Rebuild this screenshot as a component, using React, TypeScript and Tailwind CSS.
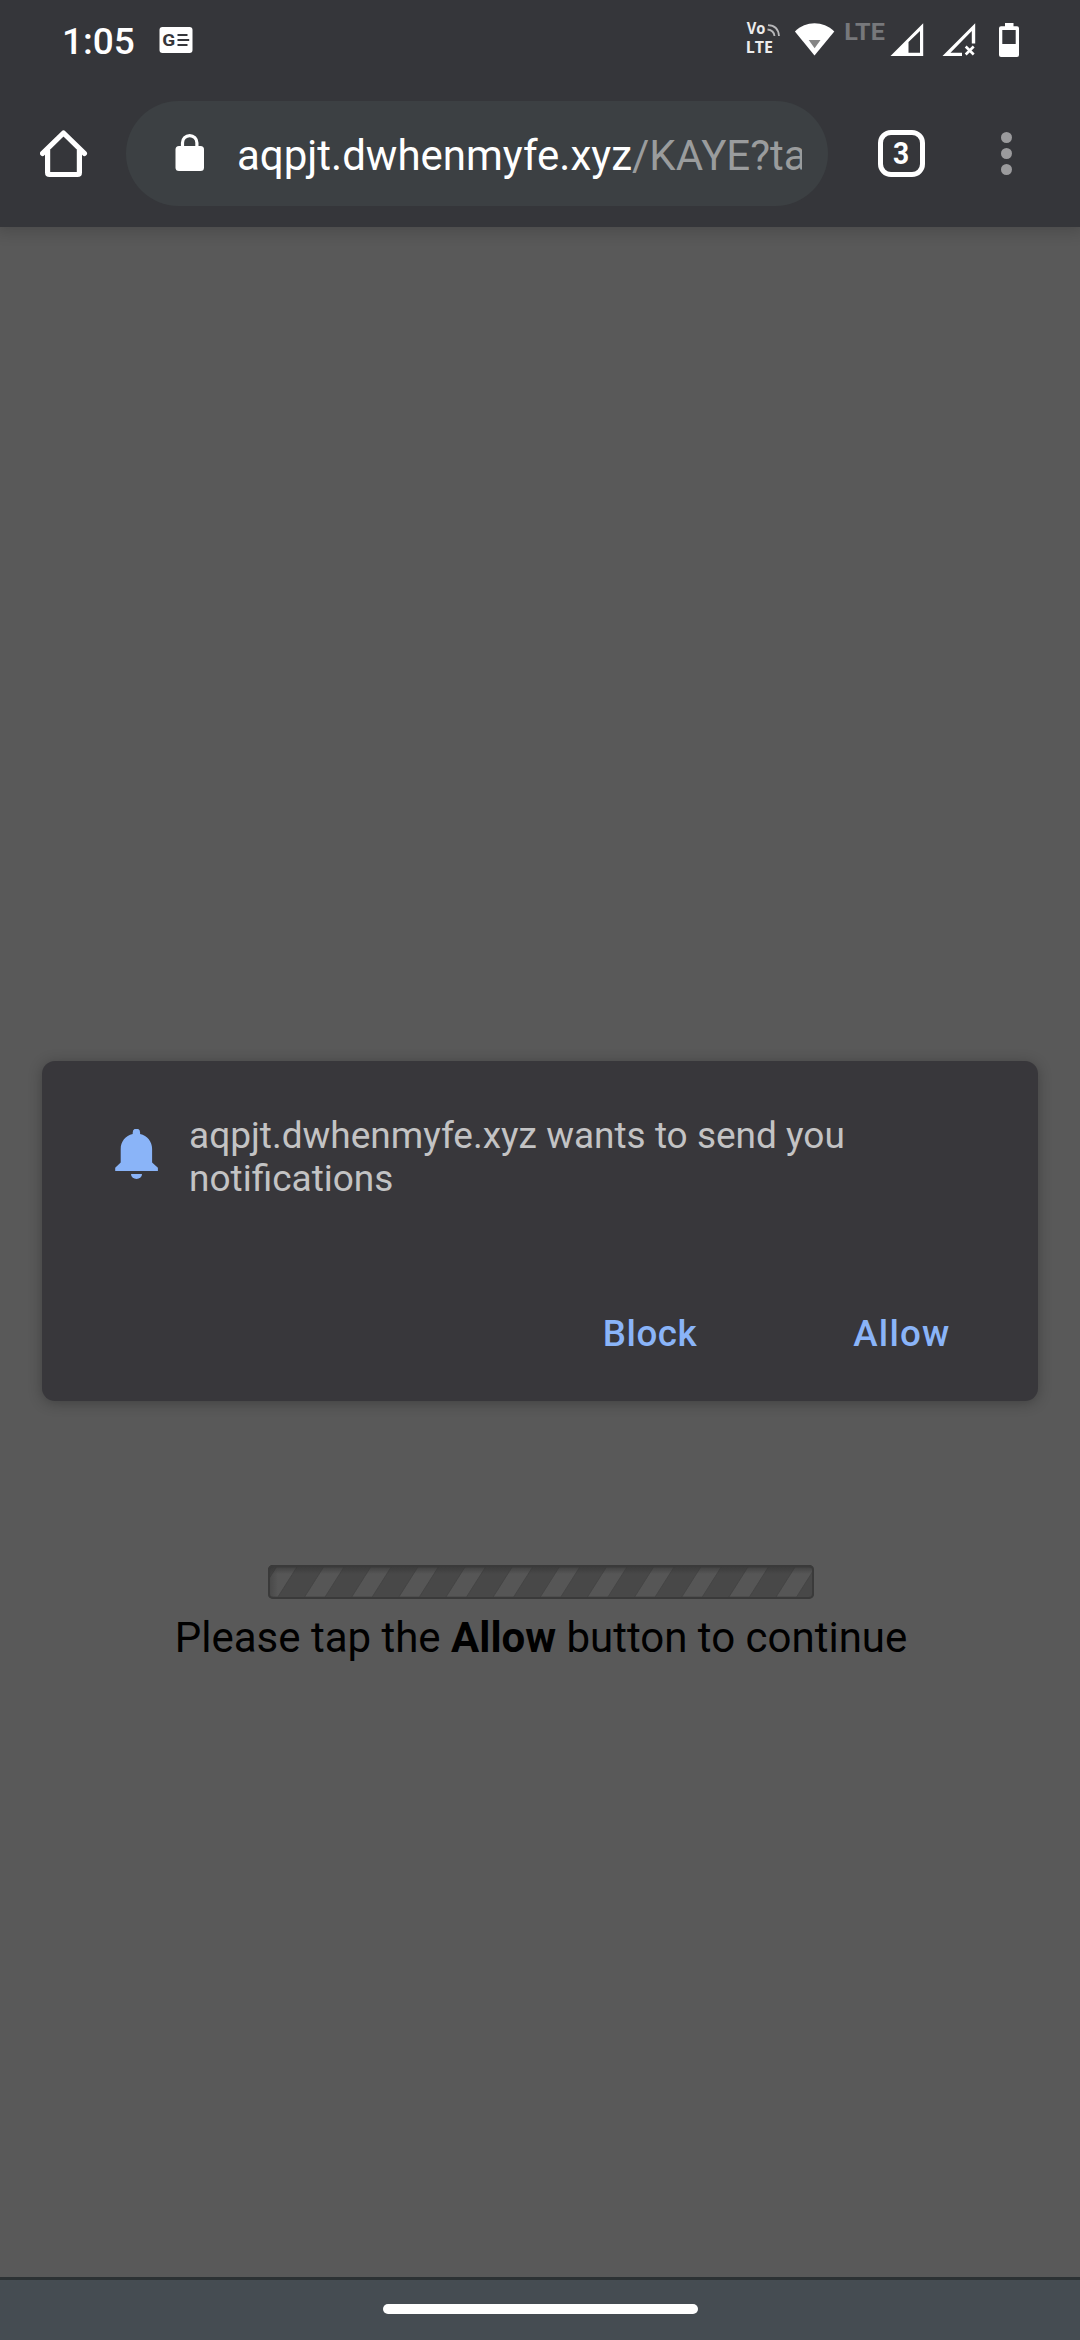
import React from "react";

function NewsIcon() {
  return (
    <svg width="34" height="28" viewBox="159 26 34 28">
      <rect x="159.5" y="27" width="33" height="26" rx="3" fill="#fff" />
      <text x="162.3" y="46" fontFamily="Roboto" fontWeight="700" fontSize="16.5" textLength="13" lengthAdjust="spacingAndGlyphs" fill="#35363a">
        G
      </text>
      <path d="M177.5 35h10M177.5 40h11.7M177.5 45h10" stroke="#35363a" strokeWidth="2.2" />
    </svg>
  );
}

function StatusIcons() {
  return (
    <svg width="284" height="44" viewBox="740 18 284 44" fill="#fff">
      <g fontFamily="Open Sans" fontWeight="700" fontSize="16.5" fill="#ececec">
        <text x="746.8" y="34.3" textLength="18.7" lengthAdjust="spacingAndGlyphs">Vo</text>
        <text x="745.7" y="52.6" textLength="27.3" lengthAdjust="spacingAndGlyphs">LTE</text>
      </g>
      <path d="M767.5 29.5c4 .4 6.6 2.6 7 6.5M768 25.2c6.5 .2 10.5 4.3 11 10.8" fill="none" stroke="#b8b8ba" strokeWidth="1.8" />
      <path d="M794.9 31.5C806 20.6 823 20.6 834.3 31.5L814.5 55.5Z" />
      <path d="M808.7 40h11.8l-5.9 8.3Z" fill="#858585" />
      <text x="844.3" y="40" fontFamily="Roboto" fontWeight="700" fontSize="23.5" textLength="40.5" lengthAdjust="spacingAndGlyphs" fill="#77787b">
        LTE
      </text>
      <path fillRule="evenodd" d="M890.5 56L923.2 23.2V56ZM908.5 52.7H920V31L908.5 42Z" />
      <path fillRule="evenodd" d="M942.5 56L975.2 23.2V43.5H971.8V31L950.5 52.7H962V56Z" />
      <path d="M965.7 46.5l8 8M973.7 46.5l-8 8" stroke="#fff" strokeWidth="2.6" />
      <path
        fillRule="evenodd"
        d="M1005 23h8.5v3.3h3.5q2 0 2 2V55q0 2-2 2h-16q-2 0-2-2V28.3q0-2 2-2h4ZM1002.300 30v14h13.4V30Z"
      />
    </svg>
  );
}

function HomeIcon() {
  return (
    <svg width="48" height="48" viewBox="40 130 48 48" fill="none" stroke="#fff" strokeWidth="5.2" strokeLinejoin="round" strokeLinecap="round">
      <path d="M42.6 153.4L63.5 133L84.4 153.4" />
      <path d="M47.6 150V172.5q0 2 2 2H77.4q2 0 2-2V150" strokeLinecap="butt" />
    </svg>
  );
}

function LockIcon() {
  return (
    <svg width="30" height="39" viewBox="175 134 30 39">
      <rect x="175.5" y="146" width="28.5" height="25" rx="3.5" fill="#fff" />
      <path d="M182.5 147v-4.200a7.200 7.200 0 0 1 14.400 0v4.200" fill="none" stroke="#fff" strokeWidth="3.200" />
    </svg>
  );
}

function BellIcon() {
  return (
    <svg width="44" height="51" viewBox="115 1129 44 51" fill="#8ab4f8">
      <path d="M115.2 1171v-3.2L120.7 1162.5V1149c0-7.5 4.8-13.2 12-15v-1.6a3.7 3.7 0 0 1 7.4 0v1.6c7.2 1.8 12 7.5 12 15v13.500L157.900 1167.800V1171Z" />
      <path d="M131 1174h11a5.500 5 0 0 1-11 0Z" />
    </svg>
  );
}

function ProgressBar() {
  const stripes = Array.from({ length: 14 }, (_, i) => -10.6 + i * 47.15);
  return (
    <svg className="block" width="546" height="34" viewBox="0 0 546 34">
      <defs>
        <clipPath id="bar">
          <rect width="546" height="34" rx="5" />
        </clipPath>
        <linearGradient id="shade" x2="0" y2="1">
          <stop offset="0" stopColor="#333" stopOpacity=".75" />
          <stop offset="1" stopColor="#333" stopOpacity="0" />
        </linearGradient>
        <linearGradient id="side">
          <stop offset="0" stopColor="#333" stopOpacity=".45" />
          <stop offset="1" stopColor="#333" stopOpacity="0" />
        </linearGradient>
      </defs>
      <g clipPath="url(#bar)">
        <rect width="546" height="34" fill="#484848" />
        {stripes.map((x) => (
          <path key={x} d={`M${x} 32h20.5L${x + 39.5} 2h-20.5Z`} fill="#565656" stroke="#424242" strokeWidth=".8" />
        ))}
        <rect width="546" height="9" fill="url(#shade)" />
        <rect width="10" height="34" fill="url(#side)" />
      </g>
      <rect x="1" y="1" width="544" height="32" rx="4" fill="none" stroke="#3a3a3a" strokeWidth="2" />
    </svg>
  );
}

export default function App() {
  return (
    <div className="flex h-[2340px] w-[1080px] flex-col overflow-hidden bg-[#595959] font-['Roboto',sans-serif]">
      <header className="h-[227px] shrink-0 bg-[#35363a] shadow-[0_1px_14px_4px_rgba(0,0,0,0.16)]">
        <div className="flex h-20 items-center pr-14 pl-[62px]">
          <span className="w-[97px] pt-[3px] text-[37px] leading-none font-medium whitespace-nowrap text-white">1:05</span>
          <NewsIcon />
          <div className="ml-auto">
            <StatusIcons />
          </div>
        </div>
        <div className="flex h-[147px] items-center pl-10">
          <HomeIcon />
          <div className="ml-[38px] flex h-[105px] w-[702px] items-center rounded-full bg-[#3c4043] pr-[26px] pl-[49px]">
            <LockIcon />
            <div className="ml-8 flex-1 overflow-hidden pt-[4px] text-[42px] leading-[49px] whitespace-nowrap text-white">
              aqpjt.dwhenmyfe.xyz<span className="text-[#9a9c9d]">/KAYE?ta</span>
            </div>
          </div>
          <div className="ml-[50px] flex size-[47px] items-center justify-center rounded-[13px] border-5 border-white">
            <span className="mb-[1px] scale-x-88 text-[32px] leading-none font-bold text-white">3</span>
          </div>
          <div className="ml-[76px] flex flex-col gap-[5px]">
            <i className="size-[11px] rounded-full bg-[#9b9b9d]" />
            <i className="size-[11px] rounded-full bg-[#9b9b9d]" />
            <i className="size-[11px] rounded-full bg-[#9b9b9d]" />
          </div>
        </div>
      </header>

      <main className="flex flex-1 flex-col items-center pt-[834px]">
        <section className="flex h-[340px] w-[996px] flex-col rounded-[13px] bg-[#38373b] shadow-[0_2px_14px_rgba(0,0,0,0.28)]">
          <div className="flex pt-[53px] pl-[73px]">
            <div className="mt-[15px]">
              <BellIcon />
            </div>
            <p className="ml-[30px] w-[700px] text-[37px] leading-[43px] text-[#c3c3c4]">
              aqpjt.dwhenmyfe.xyz wants to send you notifications
            </p>
          </div>
          <div className="mt-auto flex justify-end gap-[156px] pr-[87.5px] pb-[46px] text-[36.75px] leading-[43px] font-medium text-[#8ab4f8]">
            <button className="tracking-[0.55px]">Block</button>
            <button className="tracking-[1.2px]">Allow</button>
          </div>
        </section>
        <div className="mt-[164px] ml-[2px]">
          <ProgressBar />
        </div>
        <p className="mt-[14px] ml-[2px] text-[42px] leading-[49px] whitespace-nowrap text-black">
          Please tap the <b>Allow</b> button to continue
        </p>
      </main>

      <footer className="flex h-[63px] shrink-0 items-center justify-center border-t-3 border-[#2d3234] bg-[#454c52]">
        <div className="mt-[-2px] h-[10px] w-[315px] rounded-full bg-white" />
      </footer>
    </div>
  );
}
